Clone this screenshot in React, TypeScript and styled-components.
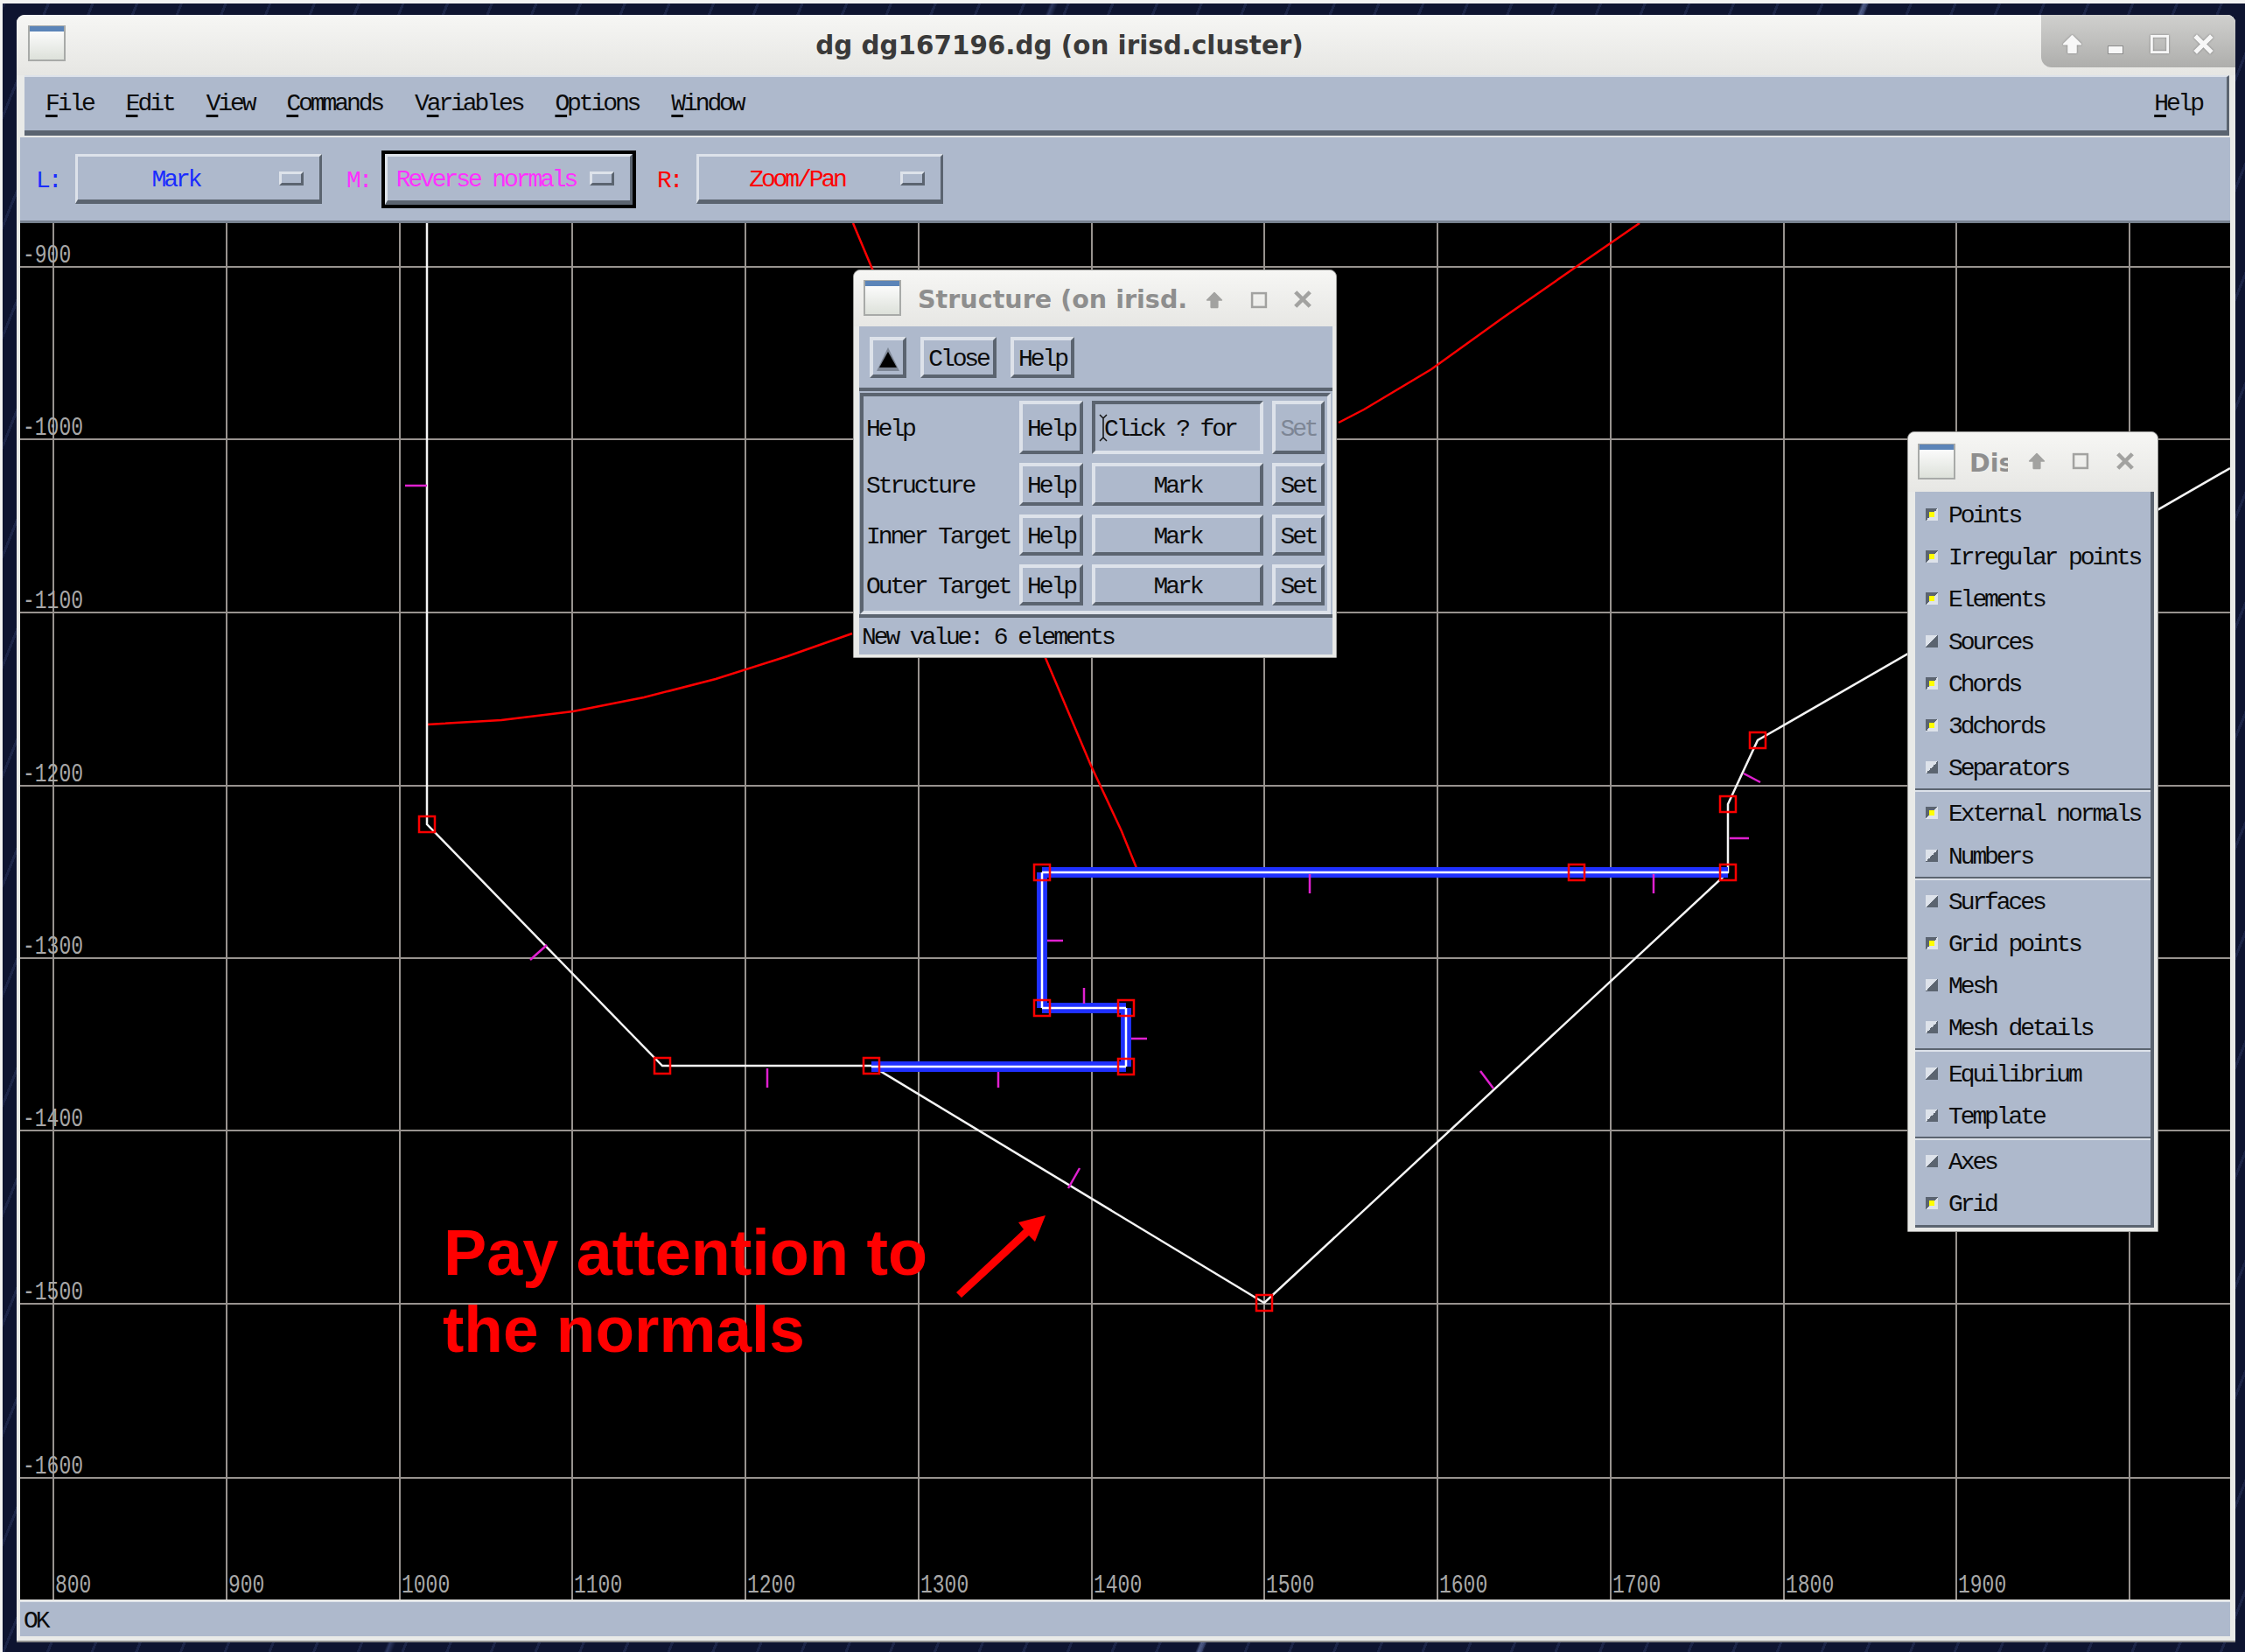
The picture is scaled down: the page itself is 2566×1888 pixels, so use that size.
import styled, { createGlobalStyle, css } from "styled-components";

const PANEL = "#aeb9cc";
const LIGHT = "#dde2ea";
const DARK = "#5b6470";
const FRAME = "#e9eae8";

const GlobalStyle = createGlobalStyle`
  html, body {
    margin: 0;
    padding: 0;
    background: #0e1430;
  }
  * {
    box-sizing: border-box;
  }
`;

const bitmapText = css`
  font-family: "Liberation Mono", monospace;
  font-size: 28px;
  letter-spacing: -3.1px;
  line-height: 1;
  white-space: pre;
  color: #0c0c0c;
  padding-top: 4px;
`;

const raised = css`
  border-style: solid;
  border-width: 4px;
  border-color: ${LIGHT} ${DARK} ${DARK} ${LIGHT};
  background: ${PANEL};
`;

const Desktop = styled.div`
  width: 2566px;
  height: 1888px;
  overflow: hidden;
  border-top: 4px solid #f2f2f2;
  border-left: 3px solid #f2f2f2;
  padding: 13px 0 0 16px;
  background-color: #0e1430;
  background-image:
    linear-gradient(112deg, transparent 63.9%, rgba(150, 170, 230, 0.5) 64%, transparent 64.2%),
    linear-gradient(112deg, transparent 36%, rgba(120, 140, 210, 0.3) 36.1%, transparent 36.3%),
    repeating-linear-gradient(112deg, rgba(70, 85, 140, 0.25) 0 3px, transparent 3px 47px);
`;

const MainWindow = styled.div`
  width: 2536px;
  height: 1860px;
  display: flex;
  flex-direction: column;
  background: ${FRAME};
  border-radius: 9px 9px 0 0;
  border-bottom: 2px solid #8d8d8d;
`;

const TitleBar = styled.div`
  height: 69px;
  flex: none;
  display: flex;
  align-items: flex-start;
  background: linear-gradient(#f6f6f4, #e6e6e3);
  border-radius: 9px 9px 0 0;
`;

const AppIcon = styled.div`
  width: 43px;
  height: 41px;
  flex: none;
  margin: 12px 0 0 13px;
  border: 2px solid #a8aaa8;
  border-top-width: 1px;
  background: linear-gradient(#5b84b8 0 6px, #fbfbfb 6px, #dde1da);
`;

const MainTitle = styled.div`
  flex: 1;
  height: 69px;
  padding-left: 14px;
  display: flex;
  align-items: center;
  justify-content: center;
  font-family: "DejaVu Sans", sans-serif;
  font-weight: 700;
  font-size: 29.4px;
  color: #3a3a3a;
  white-space: pre;
`;

const ControlCluster = styled.div`
  width: 222px;
  height: 60px;
  flex: none;
  position: relative;
  background: linear-gradient(#d0d0ce, #aeaeac);
  border-radius: 0 9px 0 12px;
`;

const Glyph = styled.svg<{ $x: number; $y: number; $size: number }>`
  position: absolute;
  left: ${(p) => p.$x}px;
  top: ${(p) => p.$y}px;
  width: ${(p) => p.$size}px;
  height: ${(p) => p.$size}px;
`;

const ClientArea = styled.div`
  flex: 1;
  display: flex;
  flex-direction: column;
  padding: 0 6px 5px 4px;
`;

const MenuBar = styled.div`
  height: 69px;
  flex: none;
  margin: 0 1px 2px 5px;
  padding: 0 0 3px 24px;
  display: flex;
  align-items: center;
  gap: 37px;
  background: ${PANEL};
  border-top: 2px solid ${LIGHT};
  border-bottom: 6px solid ${DARK};
  border-right: 3px solid ${DARK};
`;

const MenuItem = styled.span<{ $right?: boolean }>`
  ${bitmapText}
  ${(p) => p.$right && "margin-left: auto; margin-right: 28px;"}
  u {
    text-decoration-thickness: 3px;
    text-underline-offset: 5px;
  }
`;

const ToolBar = styled.div`
  height: 98px;
  flex: none;
  display: flex;
  align-items: center;
  padding-left: 18px;
  background: ${PANEL};
  border-bottom: 3px solid #77818f;
`;

const ModeLabel = styled.span<{ $color: string; $gapLeft: number; $width: number }>`
  ${bitmapText}
  color: ${(p) => p.$color};
  margin-left: ${(p) => p.$gapLeft}px;
  width: ${(p) => p.$width}px;
  flex: none;
`;

const OptionButton = styled.div<{ $wide?: boolean }>`
  ${raised}
  border-width: 3px 3px 5px 3px;
  width: ${(p) => (p.$wide ? 283 : 282)}px;
  height: ${(p) => (p.$wide ? 58 : 57)}px;
  display: flex;
  align-items: center;
`;

const OptionText = styled.span<{ $color: string }>`
  ${bitmapText}
  color: ${(p) => p.$color};
  flex: 1;
  padding-right: 6px;
  text-align: center;
`;

const OptionMark = styled.span`
  ${raised}
  border-width: 3px;
  width: 28px;
  height: 16px;
  margin-right: 18px;
  flex: none;
`;

const FocusRing = styled.div`
  border: 4px solid #000;
  flex: none;
`;

const Canvas = styled.div`
  position: relative;
  width: 2526px;
  height: 1573px;
  flex: none;
  background: #000;
  overflow: hidden;
`;

const Plot = styled.svg`
  display: block;
  width: 2526px;
  height: 1573px;
`;

const StatusBar = styled.div`
  ${bitmapText}
  height: 40px;
  flex: none;
  margin-top: 2px;
  padding-left: 4px;
  display: flex;
  align-items: center;
  background: ${PANEL};
  border-top: 1px solid ${LIGHT};
`;

const FloatWindow = styled.div<{ $x: number; $y: number; $w: number; $h: number }>`
  position: absolute;
  left: ${(p) => p.$x - 23}px;
  top: ${(p) => p.$y - 255}px;
  width: ${(p) => p.$w}px;
  height: ${(p) => p.$h}px;
  display: flex;
  flex-direction: column;
  background: ${FRAME};
  border: 1px solid #9a9a98;
  border-radius: 8px 8px 1px 1px;
`;

const FloatTitle = styled.div<{ $h: number }>`
  position: relative;
  height: ${(p) => p.$h}px;
  flex: none;
  display: flex;
  align-items: center;
  background: linear-gradient(#f6f6f4, #e7e7e4);
  border-radius: 8px 8px 0 0;
`;

const FloatIcon = styled(AppIcon)`
  margin: -2px 0 0 11px;
`;

const FloatName = styled.div<{ $w: number; $left: number }>`
  width: ${(p) => p.$w}px;
  margin-left: ${(p) => p.$left}px;
  padding-top: 2px;
  overflow: hidden;
  font-family: "DejaVu Sans", sans-serif;
  font-weight: 700;
  font-size: 28.6px;
  color: #8e8e8e;
  white-space: pre;
`;

const StructureBody = styled.div`
  flex: 1;
  margin: 0 4px 3px 6px;
  display: flex;
  flex-direction: column;
  background: ${PANEL};
`;

const ActionRow = styled.div`
  height: 74px;
  flex: none;
  display: flex;
  align-items: flex-start;
  padding: 12px 0 0 12px;
  gap: 16px;
  border-bottom: 4px solid ${DARK};
`;

const PushButton = styled.div<{ $w?: number }>`
  ${bitmapText}
  ${raised}
  display: flex;
  align-items: center;
  justify-content: center;
  height: 100%;
  ${(p) => p.$w && `width: ${p.$w}px; height: 47px;`}
`;

const DimText = styled.span`
  color: #7d8695;
`;

const FieldGrid = styled.div`
  margin: 2px 2px 0 1px;
  padding: 5px 2px 6px 3px;
  display: grid;
  grid-template-columns: 165px 73px 196px 60px;
  grid-template-rows: 61px 49px 47px 47px;
  gap: 10px;
  border-style: solid;
  border-width: 4px;
  border-color: ${DARK} ${LIGHT} ${LIGHT} ${DARK};
`;

const FieldLabel = styled.div`
  ${bitmapText}
  display: flex;
  align-items: center;
`;

const ValueField = styled.div`
  ${bitmapText}
  position: relative;
  display: flex;
  align-items: center;
  padding-left: 10px;
  border-style: solid;
  border-width: 4px;
  border-color: ${DARK} ${LIGHT} ${LIGHT} ${DARK};
`;

const TextCursor = styled.svg`
  position: absolute;
  left: 4px;
  top: 11px;
  width: 10px;
  height: 32px;
`;

const MessageLine = styled.div`
  ${bitmapText}
  flex: 1;
  display: flex;
  align-items: center;
  padding-left: 3px;
  border-top: 4px solid ${DARK};
`;

const ToggleBody = styled.div`
  flex: 1;
  margin: 0 4px 4px 8px;
  background: ${PANEL};
  border-right: 4px solid ${DARK};
  border-bottom: 3px solid ${DARK};
  padding-top: 2px;
`;

const ToggleRow = styled.div`
  height: 48.2px;
  display: flex;
  align-items: center;
  padding-left: 12px;
`;

const ToggleBox = styled.span<{ $on: boolean }>`
  position: relative;
  width: 14px;
  height: 14px;
  flex: none;
  margin-right: 12px;
  background: ${(p) =>
    p.$on
      ? `linear-gradient(135deg, ${DARK} 50%, ${LIGHT} 50%)`
      : `linear-gradient(135deg, ${LIGHT} 50%, ${DARK} 50%)`};
  &::after {
    content: "";
    display: ${(p) => (p.$on ? "block" : "none")};
    position: absolute;
    left: 4px;
    top: 4px;
    width: 6px;
    height: 6px;
    background: #ffff00;
  }
`;

const ToggleName = styled.span`
  ${bitmapText}
`;

const ToggleDivider = styled.div`
  height: 4px;
  border-top: 2px solid ${DARK};
  border-bottom: 2px solid ${LIGHT};
`;

const UpGlyph = ({ x, y, size }: { x: number; y: number; size: number }) => (
  <Glyph $x={x} $y={y} $size={size} viewBox="0 0 24 24">
    <path d="M12 2 L22 12 L16.5 12 L16.5 22 L7.5 22 L7.5 12 L2 12 Z" fill="currentColor" stroke="currentColor" strokeWidth="2" strokeLinejoin="round" />
  </Glyph>
);

const MaxGlyph = ({ x, y, size }: { x: number; y: number; size: number }) => (
  <Glyph $x={x} $y={y} $size={size} viewBox="0 0 24 24">
    <rect x="2.5" y="2.5" width="19" height="19" fill="none" stroke="currentColor" strokeWidth="3" />
  </Glyph>
);

const CloseGlyph = ({ x, y, size }: { x: number; y: number; size: number }) => (
  <Glyph $x={x} $y={y} $size={size} viewBox="0 0 24 24">
    <path d="M3 3 L21 21 M21 3 L3 21" fill="none" stroke="currentColor" strokeWidth="5" />
  </Glyph>
);

const MainControls = styled(ControlCluster)`
  color: #f7f7f7;
  svg {
    filter: drop-shadow(0 0 1px #777);
  }
`;

const MinBar = styled.span`
  position: absolute;
  left: 76px;
  top: 35px;
  width: 18px;
  height: 10px;
  background: #f7f7f7;
  border: 1px solid #8c8c8c;
`;

const DimGlyphs = styled.div`
  position: absolute;
  inset: 0;
  color: #a2a2a0;
`;

const XLINES = Array.from({ length: 13 }, (_, i) => Math.round(61 + 197.75 * i));
const YLINES = [305, 502, 700, 898, 1095, 1292, 1490, 1689];
const XLABELS = ["800", "900", "1000", "1100", "1200", "1300", "1400", "1500", "1600", "1700", "1800", "1900"];
const YLABELS = ["-900", "-1000", "-1100", "-1200", "-1300", "-1400", "-1500", "-1600"];

const NODES = [
  [488, 942], [757, 1218], [996, 1218], [1445, 1489], [1802, 997], [1975, 997],
  [1975, 919], [2009, 846], [1191, 997], [1191, 1152], [1287, 1152], [1287, 1219],
];

const BLUE_SEGS = [
  [996, 1219, 1287, 1219], [1287, 1219, 1287, 1152], [1287, 1152, 1191, 1152],
  [1191, 1152, 1191, 997], [1191, 997, 1975, 997],
];

const NORMALS = [
  [463, 555, 488, 555], [606, 1097, 625, 1080], [877, 1221, 877, 1243], [1141, 1225, 1141, 1243],
  [1221, 1358, 1234, 1335], [1197, 1075, 1215, 1075], [1239, 1129, 1239, 1147], [1293, 1187, 1311, 1187],
  [1497, 999, 1497, 1021], [1890, 999, 1890, 1021], [1692, 1224, 1707, 1244], [1977, 958, 1999, 958],
  [1993, 884, 2012, 894],
];

const RED_TRACES = [
  "488,828 573,823 655,813 736,797 818,776 900,750 974,724",
  "1530,483 1559,468 1636,422 1718,363 1800,306 1874,255",
  "975,255 996,305 1195,752 1247,875 1282,950 1299,992",
];

const STRUCTURE_ROWS = [
  { label: "Help", value: "Click ? for", dim: true },
  { label: "Structure", value: "Mark" },
  { label: "Inner Target", value: "Mark" },
  { label: "Outer Target", value: "Mark" },
];

const TOGGLE_GROUPS: [string, boolean][][] = [
  [["Points", true], ["Irregular points", true], ["Elements", true], ["Sources", false], ["Chords", true], ["3dchords", true], ["Separators", false]],
  [["External normals", true], ["Numbers", false]],
  [["Surfaces", false], ["Grid points", true], ["Mesh", false], ["Mesh details", false]],
  [["Equilibrium", false], ["Template", false]],
  [["Axes", false], ["Grid", true]],
];

const PlotLayer = () => (
  <Plot viewBox="23 255 2526 1573">
    {XLINES.map((x) => (
      <line key={x} x1={x} y1={255} x2={x} y2={1828} stroke="#98938f" strokeWidth="2" />
    ))}
    {YLINES.map((y) => (
      <line key={y} x1={23} y1={y} x2={2549} y2={y} stroke="#98938f" strokeWidth="2" />
    ))}
    {YLABELS.map((t, i) => (
      <text key={t} x={26} y={YLINES[i] - 5} fontFamily="Liberation Mono" fontSize="30" fill="#a8a8a8" textLength={t.length * 13.8} lengthAdjust="spacingAndGlyphs">
        {t}
      </text>
    ))}
    {XLABELS.map((t, i) => (
      <text key={t} x={XLINES[i] + 2} y={1820} fontFamily="Liberation Mono" fontSize="30" fill="#a8a8a8" textLength={t.length * 13.8} lengthAdjust="spacingAndGlyphs">
        {t}
      </text>
    ))}
    {RED_TRACES.map((pts) => (
      <polyline key={pts} points={pts} fill="none" stroke="#ff0000" strokeWidth="2.5" />
    ))}
    <polyline
      points="488,255 488,942 757,1218 996,1218 1445,1489 1975,997 1975,919 2009,846 2549,535"
      fill="none"
      stroke="#f4f4f4"
      strokeWidth="2.5"
    />
    {BLUE_SEGS.map(([x1, y1, x2, y2]) => (
      <line key={`${x1}-${y1}-${x2}`} x1={x1} y1={y1} x2={x2} y2={y2} stroke="#1f30ff" strokeWidth="12" />
    ))}
    {BLUE_SEGS.map(([x1, y1, x2, y2]) => (
      <line key={`w${x1}-${y1}-${x2}`} x1={x1} y1={y1} x2={x2} y2={y2} stroke="#ffffff" strokeWidth="2.5" />
    ))}
    {NORMALS.map(([x1, y1, x2, y2]) => (
      <line key={`${x1}-${y1}`} x1={x1} y1={y1} x2={x2} y2={y2} stroke="#e020d0" strokeWidth="2.5" />
    ))}
    {NODES.map(([x, y]) => (
      <rect key={`${x}-${y}`} x={x - 9} y={y - 9} width="18" height="18" fill="none" stroke="#ff0000" strokeWidth="2.5" />
    ))}
    <polygon points="1093,1477 1170,1405 1164,1397 1195,1389 1183,1419 1176,1412 1099,1483" fill="#ff0000" />
    <text x={507} y={1457} fontFamily="Liberation Sans" fontWeight="700" fontSize="75" fill="#ff0000" textLength={553} lengthAdjust="spacingAndGlyphs">
      Pay attention to
    </text>
    <text x={506} y={1545} fontFamily="Liberation Sans" fontWeight="700" fontSize="75" fill="#ff0000" textLength={414} lengthAdjust="spacingAndGlyphs">
      the normals
    </text>
  </Plot>
);

function FieldRow({ label, value, dim }: { label: string; value: string; dim?: boolean }) {
  return (
    <>
      <FieldLabel>{label}</FieldLabel>
      <PushButton>Help</PushButton>
      {dim ? (
        <ValueField>
          <TextCursor viewBox="0 0 10 32">
            <path d="M1 1 L5 5 L9 1 M5 5 L5 27 M1 31 L5 27 L9 31" fill="none" stroke="#111" strokeWidth="1.5" />
          </TextCursor>
          {value}
        </ValueField>
      ) : (
        <PushButton>{value}</PushButton>
      )}
      <PushButton>{dim ? <DimText>Set</DimText> : "Set"}</PushButton>
    </>
  );
}

const StructureWindow = () => (
  <FloatWindow $x={975} $y={308} $w={553} $h={444}>
    <FloatTitle $h={64}>
      <FloatIcon />
      <FloatName $w={316} $left={19}>Structure (on irisd.</FloatName>
      <DimGlyphs>
        <UpGlyph x={402} y={24} size={20} />
        <MaxGlyph x={453} y={24} size={20} />
        <CloseGlyph x={502} y={22} size={22} />
      </DimGlyphs>
    </FloatTitle>
    <StructureBody>
      <ActionRow>
        <PushButton $w={42}>
          <svg width="28" height="30" viewBox="0 0 28 30">
            <polygon points="14,1 27,28 1,28" fill="#7d8695" />
            <polygon points="14,6 24,24 4,24" fill="#000" />
          </svg>
        </PushButton>
        <PushButton $w={87}>Close</PushButton>
        <PushButton $w={73}>Help</PushButton>
      </ActionRow>
      <FieldGrid>
        {STRUCTURE_ROWS.map((row) => (
          <FieldRow key={row.label} {...row} />
        ))}
      </FieldGrid>
      <MessageLine>New value: 6 elements</MessageLine>
    </StructureBody>
  </FloatWindow>
);

const DisplayWindow = () => (
  <FloatWindow $x={2180} $y={493} $w={287} $h={915}>
    <FloatTitle $h={68}>
      <FloatIcon />
      <FloatName $w={44} $left={16}>Dis</FloatName>
      <DimGlyphs>
        <UpGlyph x={137} y={23} size={20} />
        <MaxGlyph x={187} y={23} size={20} />
        <CloseGlyph x={237} y={22} size={22} />
      </DimGlyphs>
    </FloatTitle>
    <ToggleBody>
      {TOGGLE_GROUPS.map((group, i) => (
        <div key={group[0][0]}>
          {i > 0 && <ToggleDivider />}
          {group.map(([name, on]) => (
            <ToggleRow key={name}>
              <ToggleBox $on={on} />
              <ToggleName>{name}</ToggleName>
            </ToggleRow>
          ))}
        </div>
      ))}
    </ToggleBody>
  </FloatWindow>
);

export default function App() {
  return (
    <>
      <GlobalStyle />
      <Desktop>
        <MainWindow>
          <TitleBar>
            <AppIcon />
            <MainTitle>dg dg167196.dg (on irisd.cluster)</MainTitle>
            <MainControls>
              <UpGlyph x={24} y={22} size={23} />
              <MinBar />
              <MaxGlyph x={124} y={22} size={23} />
              <CloseGlyph x={173} y={21} size={25} />
            </MainControls>
          </TitleBar>
          <ClientArea>
            <MenuBar>
              <MenuItem><u>F</u>ile</MenuItem>
              <MenuItem><u>E</u>dit</MenuItem>
              <MenuItem><u>V</u>iew</MenuItem>
              <MenuItem><u>C</u>ommands</MenuItem>
              <MenuItem>V<u>a</u>riables</MenuItem>
              <MenuItem><u>O</u>ptions</MenuItem>
              <MenuItem><u>W</u>indow</MenuItem>
              <MenuItem $right><u>H</u>elp</MenuItem>
            </MenuBar>
            <ToolBar>
              <ModeLabel $color="#1a2cff" $gapLeft={0} $width={45}>L:</ModeLabel>
              <OptionButton>
                <OptionText $color="#1a2cff">Mark</OptionText>
                <OptionMark />
              </OptionButton>
              <ModeLabel $color="#ff30ff" $gapLeft={28} $width={40}>M:</ModeLabel>
              <FocusRing>
                <OptionButton $wide>
                  <OptionText $color="#ff30ff">Reverse normals</OptionText>
                  <OptionMark />
                </OptionButton>
              </FocusRing>
              <ModeLabel $color="#ff0000" $gapLeft={24} $width={45}>R:</ModeLabel>
              <OptionButton>
                <OptionText $color="#ff0000">Zoom/Pan</OptionText>
                <OptionMark />
              </OptionButton>
            </ToolBar>
            <Canvas>
              <PlotLayer />
              <StructureWindow />
              <DisplayWindow />
            </Canvas>
            <StatusBar>OK</StatusBar>
          </ClientArea>
        </MainWindow>
      </Desktop>
    </>
  );
}
